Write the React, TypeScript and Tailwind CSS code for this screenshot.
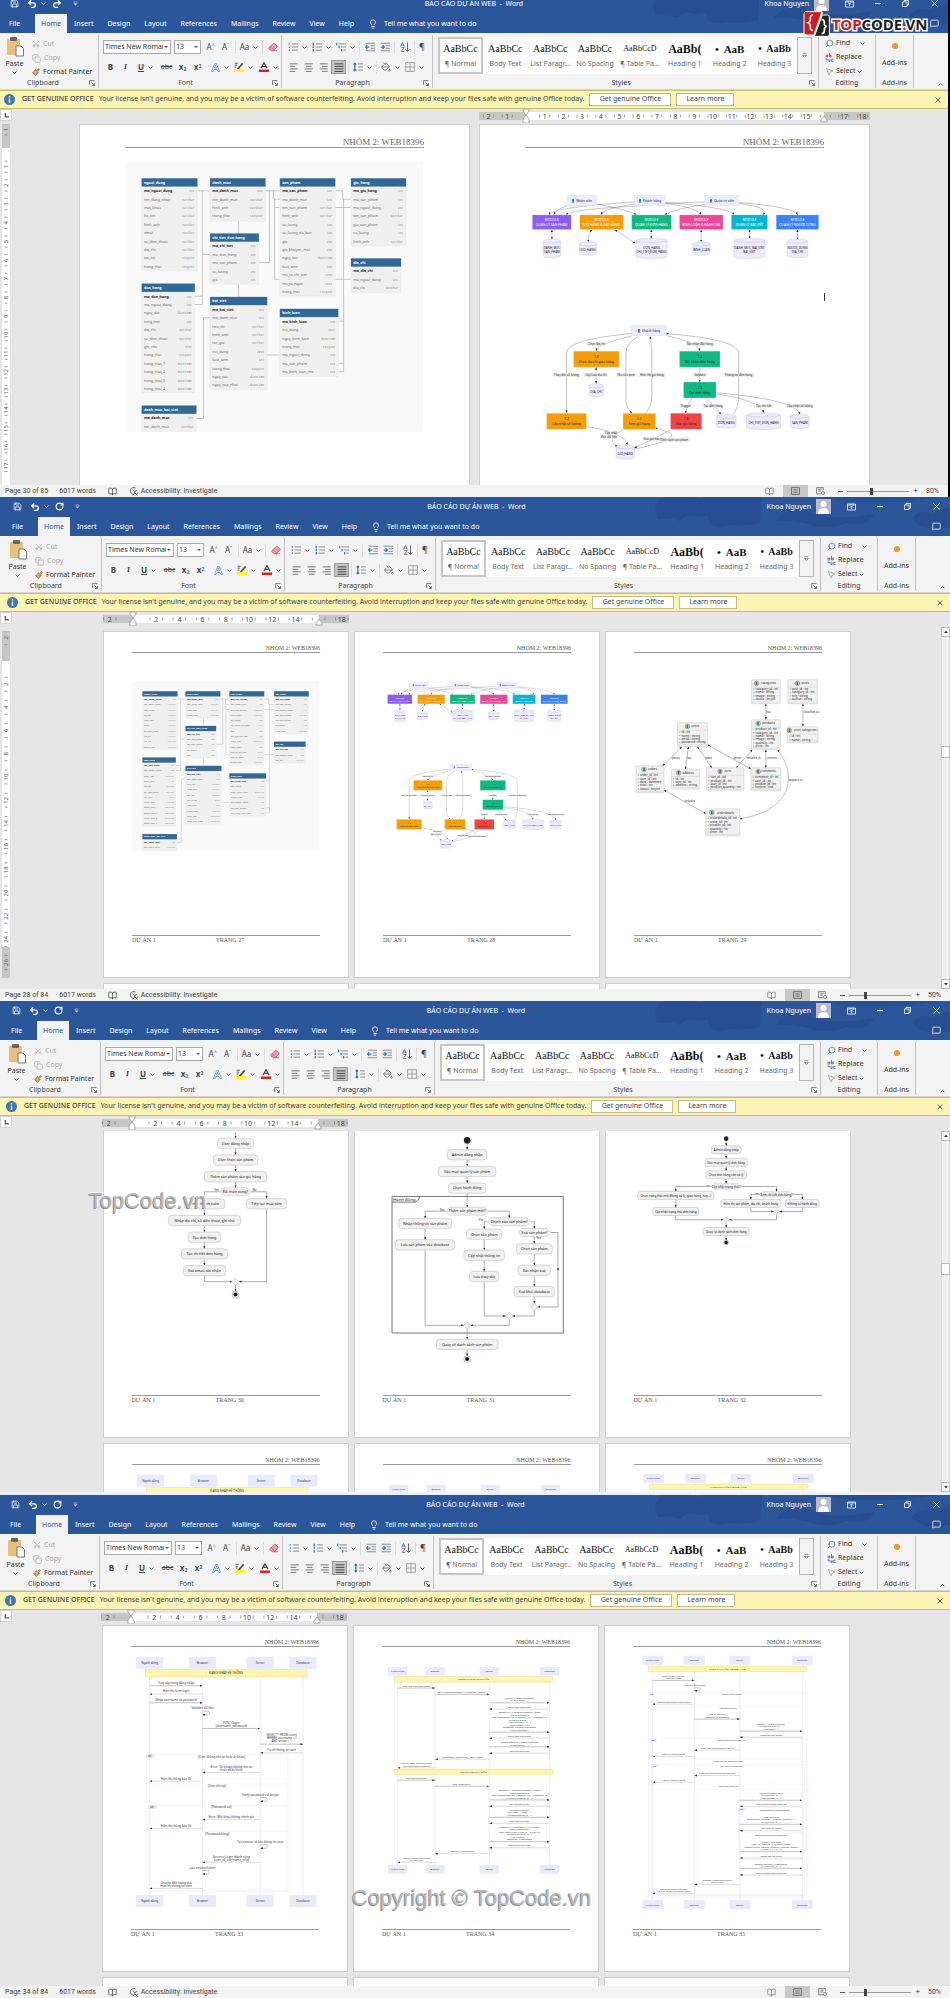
import React from "react"
import { Scissors, Copy, Paintbrush, Lightbulb, Search, MousePointer2, MessageSquare, Save, Undo2, Redo2, RotateCw, Eraser, PaintBucket, BookOpen } from "lucide-react"

const Chev = ({ className = "" }: { className?: string }) => (
  <svg viewBox="0 0 8 8" className={"h-[5px] w-[5px] shrink-0 " + className} fill="none" stroke="currentColor" strokeWidth="1.4">
    <path d="M1 2.5l3 3 3-3" />
  </svg>
)

const Sep = () => <span className="mx-[2px] h-[13px] w-px bg-[#dcdcdc]" />

/* ---------- ribbon ---------- */

const Group = ({ label, width, launcher, children }: { label: string; width: string; launcher?: boolean; children: React.ReactNode }) => (
  <section className={"flex h-[53px] flex-col justify-between border-r border-[#c2c2c2] " + width}>
    <div className="h-[43px]">{children}</div>
    <div className="flex h-[10px] items-center text-[7px] leading-[10px] whitespace-nowrap text-[#444]">
      <span className="flex-1 text-center">{label}</span>
      {launcher && (
        <button aria-label={label + " settings"} className="block w-[9px]">
          <svg viewBox="0 0 10 10" className="h-[6px] w-[6px]" fill="none" stroke="#555" strokeWidth="1.3">
            <path d="M1 8V1h8M4 4l5 5M9 5v4H5" />
          </svg>
        </button>
      )}
    </div>
  </section>
)

const Pick = ({ value, label, width }: { value: string; label: string; width: string }) => (
  <div className={"relative h-[14px] border border-[#ababab] bg-white " + width}>
    <select aria-label={label} className="block h-full w-full appearance-none pr-[7px] pl-[1px] text-[7px] leading-[12px] text-[#333] outline-none">
      <option>{value}</option>
    </select>
    <svg viewBox="0 0 8 8" className="pointer-events-none absolute top-[4px] right-[2px] h-[4px] w-[4px]">
      <path d="M0 2h8L4 6z" fill="#555" />
    </svg>
  </div>
)

const Tool = ({ label, w = "w-[15px]", on, chev, children }: { label: string; w?: string; on?: boolean; chev?: boolean; children: React.ReactNode }) => (
  <button aria-label={label} className={"flex h-[14px] shrink-0 items-center justify-center gap-[4px] text-[#444] " + w + (on ? " border border-[#9a9a9a] bg-[#c5c5c5]" : "")}>
    {children}
    {chev && <Chev />}
  </button>
)

const Lines = ({ d, color = "#666" }: { d: string; color?: string }) => (
  <svg viewBox="0 0 16 16" className="h-[10px] w-[10px]" fill="none" stroke={color} strokeWidth="1.4">
    <path d={d} />
  </svg>
)

const ListIcon = ({ dots, rows }: { dots: string; rows: string }) => (
  <svg viewBox="0 0 16 16" className="h-[10px] w-[10px]" fill="none" strokeWidth="1.3">
    <path d={dots} stroke="#3b74b8" strokeWidth="2" />
    <path d={rows} stroke="#777" />
  </svg>
)

const styles = [
  { name: "¶ Normal", sample: "AaBbCc", cls: "text-[10px]" },
  { name: "Body Text", sample: "AaBbCc", cls: "text-[10px]" },
  { name: "List Paragr...", sample: "AaBbCc", cls: "text-[10px]" },
  { name: "No Spacing", sample: "AaBbCc", cls: "text-[10px]" },
  { name: "¶ Table Pa...", sample: "AaBbCcD", cls: "text-[8px]" },
  { name: "Heading 1", sample: "AaBb(", cls: "text-[12px] font-bold" },
  { name: "Heading 2", sample: "•  AaB", cls: "text-[11px] font-bold" },
  { name: "Heading 3", sample: "•  AaBb", cls: "text-[10px] font-bold" },
]

const Ribbon = () => (
  <div className="flex h-[57px] border-b border-[#d5d5d5] bg-[#f3f3f3] pt-[2px]">
    <Group label="Clipboard" width="w-[102px]" launcher>
      <div className="flex h-full">
        <button className="flex w-[35px] flex-col items-center pt-[2px] text-[7px] leading-[9px] text-[#333]">
          <svg viewBox="0 0 18 20" className="h-[20px] w-[18px]">
            <rect x="1" y="2" width="13" height="16" rx="1" fill="#e8c07a" />
            <rect x="4" y="0" width="7" height="4" rx="1" fill="#666" />
            <path d="M10 9h5l2.500 2.500V19H10z" fill="#fff" stroke="#777" />
          </svg>
          <span className="mt-[2px]">Paste</span>
          <Chev className="mt-[2px]" />
        </button>
        <div className="flex flex-col pt-[2px] text-[7px] leading-[14px]">
          <button className="flex h-[14px] items-center gap-[3px] text-[#aaa]"><Scissors className="h-[8px] w-[8px] -rotate-90" />Cut</button>
          <button className="flex h-[14px] items-center gap-[3px] text-[#aaa]"><Copy className="h-[9px] w-[9px]" />Copy</button>
          <button className="flex h-[14px] items-center gap-[3px] text-[#333]"><Paintbrush className="h-[8px] w-[8px] text-[#8a6a3a]" fill="#e0a85a" />Format Painter</button>
        </div>
      </div>
    </Group>

    <Group label="Font" width="w-[183px]" launcher>
      <div className="flex flex-col gap-[6px] pt-[5px] pl-[4px]">
        <div className="flex items-center text-[8px]">
          <Pick value="Times New Roman" label="Font name" width="w-[68px] mr-[3px]" />
          <Pick value="13" label="Font size" width="w-[27px] mr-[2px]" />
          <Tool label="Grow font">A<sup className="-ml-[4px] text-[5px] text-[#2b6cb0]">^</sup></Tool>
          <Tool label="Shrink font">A<sup className="-ml-[4px] text-[5px] text-[#2b6cb0]">ˇ</sup></Tool>
          <Sep />
          <Tool label="Change case" w="w-[22px]" chev>Aa</Tool>
          <Sep />
          <Tool label="Clear formatting"><Eraser className="h-[10px] w-[10px] text-[#c2566a]" fill="#eb9fac" /></Tool>
        </div>
        <div className="flex items-center text-[8px]">
          <Tool label="Bold"><b>B</b></Tool>
          <Tool label="Italic"><i className="font-serif font-bold">I</i></Tool>
          <Tool label="Underline" w="w-[25px]" chev><u className="font-bold">U</u></Tool>
          <Tool label="Strikethrough" w="w-[17px]"><s className="text-[7px]">abc</s></Tool>
          <Tool label="Subscript"><b>x<sub className="text-[5px] text-[#2b6cb0]">2</sub></b></Tool>
          <Tool label="Superscript"><b>x<sup className="text-[5px] text-[#2b6cb0]">2</sup></b></Tool>
          <Sep />
          <Tool label="Text effects" w="w-[22px]" chev>
            <svg viewBox="0 0 16 16" className="h-[9px] w-[9px]" fill="#fff" stroke="#4a86c8" strokeWidth="1.3">
              <path d="M1 15L6.500 1h3L15 15h-3l-1.200-3.500H5.200L4 15zM6 9h4L8 3.500z" />
            </svg>
          </Tool>
          <Tool label="Highlight" w="w-[25px]" chev>
            <svg viewBox="0 0 16 16" className="h-[10px] w-[10px]">
              <rect y="11" width="16" height="5" fill="#fdf22f" />
              <path d="M5 10L13 1l2 2-7 8H5z" fill="#555" />
              <path d="M1 2h5M1 5h4M1 8h3" stroke="#555" strokeWidth="1.500" />
            </svg>
          </Tool>
          <Tool label="Font color" w="w-[25px]" chev>
            <svg viewBox="0 0 16 16" className="h-[10px] w-[10px]">
              <rect y="12" width="16" height="4" fill="#d92222" />
              <path d="M3 10L8 1l5 9M5 7h6" fill="none" stroke="#444" strokeWidth="1.800" />
            </svg>
          </Tool>
        </div>
      </div>
    </Group>

    <Group label="Paragraph" width="w-[151px]" launcher>
      <div className="flex flex-col gap-[6px] pt-[5px] pl-[4px]">
        <div className="flex items-center">
          <Tool label="Bullets" w="w-[23px]" chev><ListIcon dots="M1 3h2M1 8h2M1 13h2" rows="M6 3h10M6 8h10M6 13h10" /></Tool>
          <Tool label="Numbering" w="w-[25px]" chev><ListIcon dots="M2 1v4M2 6v4M2 11v4" rows="M6 3h10M6 8h10M6 13h10" /></Tool>
          <Tool label="Multilevel list" w="w-[23px]" chev><ListIcon dots="M1 1v4M5 6v4M9 11v4" rows="M4 3h12M8 8h8M12 13h4" /></Tool>
          <Sep />
          <Tool label="Decrease indent"><ListIcon dots="M7 8H1M3.500 5L1 8l2.500 3" rows="M1 2h15M9 6h7M9 10h7M1 14h15" /></Tool>
          <Tool label="Increase indent"><ListIcon dots="M1 8h6M4 5l3 3-3 3" rows="M1 2h15M9 6h7M9 10h7M1 14h15" /></Tool>
          <Sep />
          <Tool label="Sort">
            <svg viewBox="0 0 16 16" className="h-[10px] w-[10px]" fill="none" strokeWidth="1.4">
              <path d="M1 7l3-6 3 6M2 5h4" stroke="#3b74b8" />
              <path d="M2 9h5l-5 6h5" stroke="#8a4fa0" />
              <path d="M12 1v14M9 12l3 3 3-3" stroke="#555" />
            </svg>
          </Tool>
          <Sep />
          <Tool label="Show marks" w="w-[10px]"><span className="text-[9px]">¶</span></Tool>
        </div>
        <div className="flex items-center">
          <Tool label="Align left"><Lines d="M1 3h13M1 7h9M1 11h13M1 15h9" /></Tool>
          <Tool label="Center"><Lines d="M1 3h13M3 7h9M1 11h13M3 15h9" /></Tool>
          <Tool label="Align right"><Lines d="M1 3h13M5 7h9M1 11h13M5 15h9" /></Tool>
          <Tool label="Justify" on><Lines d="M1 3h14M1 7h14M1 11h14M1 15h14" color="#333" /></Tool>
          <Sep />
          <Tool label="Line spacing" w="w-[23px]" chev><ListIcon dots="M3 2v12M1 4l2-2 2 2M1 12l2 2 2-2" rows="M8 3h8M8 8h8M8 13h8" /></Tool>
          <Sep />
          <Tool label="Shading" w="w-[23px]" chev><PaintBucket className="h-[10px] w-[10px]" strokeWidth={1.5} /></Tool>
          <Tool label="Borders" w="w-[25px]" chev><Lines d="M1 1h14v14H1zM8 1v14M1 8h14" color="#999" /></Tool>
        </div>
      </div>
    </Group>

    <Group label="Styles" width="min-w-0 flex-1" launcher>
      <div className="flex pt-[2px] pr-[6px] pl-[5px]">
        <div className="grid h-[37px] flex-1 grid-cols-8 bg-white">
          {styles.map((s, i) => (
            <button key={s.name} className={"flex min-w-0 flex-col items-center justify-center overflow-hidden whitespace-pre " + (i === 0 ? "border-2 border-[#c6c6c6]" : "")}>
              <span className={"h-[16px] font-['Liberation_Serif',serif] leading-[16px] text-[#111] " + s.cls}>{s.sample}</span>
              <span className="text-[7px] leading-[13px] text-[#666]">{s.name}</span>
            </button>
          ))}
        </div>
        <button aria-label="More styles" className="flex h-[37px] w-[15px] items-center justify-center border border-[#b5b5b5] bg-[#f3f3f3]">
          <svg viewBox="0 0 8 8" className="h-[5px] w-[5px]" fill="none" stroke="#555"><path d="M1 1h6M1 4l3 3 3-3z" /></svg>
        </button>
      </div>
    </Group>

    <Group label="Editing" width="w-[57px]">
      <div className="flex flex-col pt-[1px] pl-[6px] text-[7px] leading-[14px] text-[#333]">
        <button className="flex h-[14px] items-center gap-[2px]"><Search className="h-[9px] w-[9px] -scale-x-100 text-[#3b74b8]" />Find<Chev className="ml-[8px]" /></button>
        <button className="flex h-[14px] items-center gap-[2px]">
          <svg viewBox="0 0 16 16" className="h-[9px] w-[9px]" fill="none" strokeWidth="1.6">
            <path d="M5 3v4H2V4h3M8 0v7h3V4H8" stroke="#8a4fa0" />
            <path d="M2 9v3h4M9 11v4H7v-3M15 11h-3v4h3" stroke="#3b74b8" />
          </svg>
          Replace
        </button>
        <button className="flex h-[14px] items-center gap-[2px]"><MousePointer2 className="h-[9px] w-[9px] text-[#999]" />Select<Chev /></button>
      </div>
    </Group>

    <Group label="Add-ins" width="w-[38px]">
      <button className="flex w-full flex-col items-center gap-[9px] pt-[8px] text-[7px] leading-[9px] whitespace-nowrap text-[#333]">
        <span className="h-[6px] w-[6px] rounded-full bg-[#f0962a]" />
        Add-ins
      </button>
    </Group>

    <div className="flex w-[34px] items-end justify-end pr-[5px] pb-[2px] text-[#555]">
      <button aria-label="Collapse ribbon"><Chev className="rotate-180" /></button>
    </div>
  </div>
)

/* ---------- title bar, tabs, notice ---------- */

const tabs = ["Insert", "Design", "Layout", "References", "Mailings", "Review", "View", "Help"]

const TitleBar = ({ redo }: { redo?: boolean }) => (
  <header className="relative h-[39px] bg-[#2b579a] text-white">
    <svg viewBox="0 0 300 39" className="absolute top-0 right-0 h-[39px] w-[300px]" fill="#26498a" opacity="0.6">
      <path d="M6 8Q4 16 8 22Q20 20 30 24Q36 16 48 20L64 18Q60 10 66 4L40 0H12z" />
      <path d="M52 0L60 26Q66 32 78 28Q92 30 110 26L112 0z" />
      <path d="M126 24Q134 10 158 14L176 20Q200 22 224 17Q220 30 196 26Q180 34 158 27Q140 22 126 24z" />
      <path d="M262 22Q270 12 282 16L300 10V30Q280 34 268 28z" />
      <path d="M170 0Q200 8 260 4L290 0z" />
    </svg>
    <div className="relative flex h-[19px] items-center">
      <div className="flex flex-1 items-center pl-[13px]">
        <button aria-label="Save"><Save className="h-[9px] w-[9px]" /></button>
        <button aria-label="Undo" className="ml-[8px] flex items-center gap-[4px]"><Undo2 className="h-[10px] w-[10px]" strokeWidth={3} /><Chev /></button>
        <button aria-label="Repeat" className="ml-[6px]">
          {redo ? <Redo2 className="h-[10px] w-[10px]" strokeWidth={3} /> : <RotateCw className="h-[9px] w-[9px]" strokeWidth={3} />}
        </button>
        <button aria-label="Customize" className="ml-[11px]">
          <svg viewBox="0 0 8 8" className="h-[5px] w-[5px]" fill="#fff"><path d="M1 1h6v1H1zM1 4h6L4 7z" /></svg>
        </button>
      </div>
      <h1 className="text-[7px] leading-[10px] whitespace-pre">BÁO CÁO DỰ ÁN WEB  -  Word</h1>
      <div className="flex flex-1 items-center justify-end pr-[10px]">
        <span className="text-[7px] leading-[10px]">Khoa Nguyen</span>
        <svg viewBox="0 0 15 15" className="ml-[5px] h-[15px] w-[15px]">
          <rect width="15" height="15" fill="#b9bcc4" />
          <circle cx="7.500" cy="5" r="3" fill="#fff" />
          <path d="M2 15q0-6 5.500-6T13 15z" fill="#fff" />
        </svg>
        <button aria-label="Ribbon display options" className="ml-[16px]">
          <svg viewBox="0 0 18 16" className="h-[8px] w-[9px]" fill="none" stroke="#fff" strokeWidth="1.600"><path d="M1 2h16v12H1zM1 4h16M9 12V6M6 9l3-3 3 3" /></svg>
        </button>
        <button aria-label="Minimize" className="ml-[21px]"><span className="block h-px w-[6px] bg-white" /></button>
        <button aria-label="Restore" className="ml-[21px]">
          <svg viewBox="0 0 14 14" className="h-[7px] w-[7px]" fill="none" stroke="#fff" strokeWidth="1.600"><path d="M1 4h9v9H1zM4 4V1h9v9h-3" /></svg>
        </button>
        <button aria-label="Close" className="ml-[22px]">
          <svg viewBox="0 0 14 14" className="h-[7px] w-[7px]" stroke="#fff" strokeWidth="1.800"><path d="M1 1l12 12M13 1L1 13" /></svg>
        </button>
      </div>
    </div>
    <nav className="relative mt-px flex h-[19px] items-stretch text-[7px] leading-[18px]">
      <button className="w-[38px] pl-[12px] text-left">File</button>
      <button className="w-[32px] bg-[#f3f3f3] text-[#2b579a]">Home</button>
      {tabs.map((t) => (
        <button key={t} className="px-[7px]">{t}</button>
      ))}
      <button className="ml-[7px] flex items-center gap-[6px]"><Lightbulb className="h-[10px] w-[10px]" />Tell me what you want to do</button>
      <button aria-label="Comments" className="mr-[9px] ml-auto"><MessageSquare className="h-[9px] w-[9px]" /></button>
    </nav>
  </header>
)

const Notice = () => (
  <div className="flex h-[19px] items-center border-y border-[#c9bd72] bg-[#fcf4b5] pl-[7px] text-[7px] text-[#444]">
    <svg viewBox="0 0 12 12" className="h-[11px] w-[11px] shrink-0">
      <circle cx="6" cy="6" r="6" fill="#3f78ab" />
      <path d="M6 2.200v1.600M6 5v4.500" stroke="#fff" strokeWidth="1.600" />
    </svg>
    <strong className="ml-[7px] font-medium whitespace-nowrap">GET GENUINE OFFICE</strong>
    <span className="ml-[5px] whitespace-nowrap">Your license isn't genuine, and you may be a victim of software counterfeiting. Avoid interruption and keep your files safe with genuine Office today.</span>
    <button className="ml-[5px] h-[13px] w-[82px] border border-[#c3bd8c] bg-white whitespace-nowrap">Get genuine Office</button>
    <button className="ml-[5px] h-[13px] w-[58px] border border-[#c3bd8c] bg-white">Learn more</button>
    <button aria-label="Dismiss" className="mr-[7px] ml-auto">
      <svg viewBox="0 0 10 10" className="h-[6px] w-[6px]" stroke="#555" strokeWidth="1.600"><path d="M1 1l8 8M9 1L1 9" /></svg>
    </button>
  </div>
)

/* ---------- rulers, scroll bar, status bar ---------- */

// length in px, zero = position of 0, unit = px per cm, step = cm between numbers
const Ruler = ({ length, zero, end, unit, step, className = "" }: { length: number; zero: number; end: number; unit: number; step: number; className?: string }) => {
  const marks: number[] = []
  for (let n = -2; n * unit + zero < length - 2; n += step) if (n !== 0) marks.push(n)
  return (
    <svg viewBox={`0 0 ${length} 14`} width={length} height="14" className={"shrink-0 " + className} fontSize="7" fill="#444" textAnchor="middle">
      <rect y="3" width={length} height="8" fill="#c6c6c6" />
      <rect x={zero} y="3" width={end - zero} height="8" fill="#fff" />
      {marks.map((n) => (
        <g key={n}>
          {Math.abs(n * unit + zero - end) > 5 && <text x={zero + n * unit} y="9.500">{Math.abs(n)}</text>}
          <path d={`M${zero + (n - step * 0.27) * unit} 5.500v3M${zero + (n + step * 0.27) * unit} 5.500v3`} stroke="#777" strokeWidth="0.700" />
        </g>
      ))}
      <path d={`M${zero - 3} 0h6v2l-3 4-3-4zM${zero - 3} 10l3-4 3 4v4h-6z`} fill="#fff" stroke="#888" strokeWidth="0.700" />
      <path d={`M${end - 3} 11l3-4 3 4v2h-6z`} fill="#fff" stroke="#888" strokeWidth="0.700" />
    </svg>
  )
}

const SideRuler = ({ height, zero, end, unit, step }: { height: number; zero: number; end: number; unit: number; step: number }) => {
  const marks: number[] = []
  for (let n = -2; n * unit + zero < height - 3; n += step) if (n !== 0 && n * unit + zero > 3) marks.push(n)
  return (
    <svg viewBox={`0 0 8 ${height}`} width="8" height={height} className="absolute top-0 left-[2px]" fontSize="6" fill="#555" textAnchor="middle">
      <rect width="8" height={height} fill="#c6c6c6" />
      <rect y={zero} width="8" height={end - zero} fill="#fff" />
      {marks.map((n) => (
        <g key={n} transform={`translate(6 ${zero + n * unit}) rotate(-90)`}>
          <text>{Math.abs(n)}</text>
          <path d={`M${-step * unit * 0.3} -3.500v3M${step * unit * 0.3} -3.500v3`} stroke="#777" strokeWidth="0.700" />
        </g>
      ))}
    </svg>
  )
}

const ScrollBar = ({ thumb }: { thumb: string }) => (
  <div className="flex w-[9px] flex-col items-center border-x border-[#dcdcdc] bg-[#f0f0f0]">
    <span className="flex h-[10px] w-[9px] items-center justify-center border border-[#bbb] bg-white"><svg viewBox="0 0 8 8" className="h-[4px] w-[4px]"><path d="M0 6l4-5 4 5z" fill="#333" /></svg></span>
    <span className={"h-[12px] w-[9px] border border-[#bbb] bg-white " + thumb} />
    <span className="mt-auto flex h-[10px] w-[9px] items-center justify-center border border-[#bbb] bg-white"><svg viewBox="0 0 8 8" className="h-[4px] w-[4px]"><path d="M0 2l4 5 4-5z" fill="#333" /></svg></span>
  </div>
)

const StatusBar = ({ page, zoom, value }: { page: string; zoom: string; value: number }) => (
  <footer className="flex h-[12px] items-center bg-[#f3f3f3] pl-[5px] font-['Roboto',sans-serif] text-[7px] leading-[12px] text-[#444]">
    <span>{page}</span>
    <span className="ml-[11px]">6017 words</span>
    <BookOpen className="ml-[12px] h-[9px] w-[9px]" />
    <svg viewBox="0 0 16 16" className="ml-[13px] h-[9px] w-[9px]" fill="none" stroke="#555" strokeWidth="1.600">
      <path d="M7 13A6 6 0 1 1 10 2M5 5l3 3v3l-3 4M8 8l5-2M9 11l5 4M14 10l-4 5" />
    </svg>
    <span className="ml-[2px]">Accessibility: Investigate</span>
    <div className="ml-auto flex items-center pr-[8px]">
      <button aria-label="Read mode"><BookOpen className="h-[9px] w-[9px] text-[#777]" /></button>
      <button aria-label="Print layout" className="ml-[9px] flex h-[12px] w-[25px] items-center justify-center bg-[#c8c8c8]">
        <svg viewBox="0 0 16 14" className="h-[8px] w-[9px]" fill="none" stroke="#666" strokeWidth="1.600"><path d="M1 1h14v12H1zM4 5h8M4 9h8" /></svg>
      </button>
      <button aria-label="Web layout" className="ml-[8px]">
        <svg viewBox="0 0 16 14" className="h-[8px] w-[9px]" fill="none" stroke="#777" strokeWidth="1.600"><path d="M10 12H1V1h12v5M4 4h6M4 7h5" /><circle cx="12.500" cy="10.500" r="2.800" /></svg>
      </button>
      <button aria-label="Zoom out" className="ml-[13px]"><span className="block h-px w-[5px] bg-[#555]" /></button>
      <input
        type="range" aria-label="Zoom" min="0" max="100" defaultValue={value}
        className="mx-[4px] h-px w-[62px] appearance-none bg-[#999] [&::-webkit-slider-thumb]:h-[7px] [&::-webkit-slider-thumb]:w-[3px] [&::-webkit-slider-thumb]:appearance-none [&::-webkit-slider-thumb]:bg-[#444]"
      />
      <button aria-label="Zoom in" className="text-[8px]">+</button>
      <span className="ml-[8px] w-[14px]">{zoom}</span>
    </div>
  </footer>
)

/* ---------- paper ---------- */

const Sheet = ({ children, page, gap = "" }: { children?: React.ReactNode; page?: string; gap?: string }) => (
  <article className="flex h-[347px] w-[246px] shrink-0 flex-col border border-[#d0d0d0] bg-white px-[28px] font-['Liberation_Serif',serif] text-[6px] leading-[6px] text-[#555]">
    <div className="mt-[13px] h-[8px] border-b border-[#999] text-right">NHÓM 2: WEB18396</div>
    <div className={"h-[282px] " + gap}>{children}</div>
    <div className="grid grid-cols-[84px_1fr] border-t border-[#999] pt-px">
      <span>DỰ ÁN 1</span>
      <span>TRANG {page}</span>
    </div>
  </article>
)

const BigSheet = ({ children, gap }: { children: React.ReactNode; gap: string }) => (
  <article className="h-[372px] w-[391px] shrink-0 border border-b-0 border-[#d0d0d0] bg-white px-[45px] font-['Liberation_Serif',serif] text-[9px] leading-[10px] text-[#666]">
    <div className="mt-[12px] h-[11px] border-b border-[#999] text-right">NHÓM 2: WEB18396</div>
    <div className={gap}>{children}</div>
  </article>
)

/* ---------- database tables ---------- */

type Table = { name: string; x: number; y: number; w: number; rows: string }
const tables: Table[] = [
  { name: "nguoi_dung", x: 215, y: 174, w: 168, rows: "ma_nguoi_dung:int,ten_dang_nhap:varchar,mat_khau:varchar,ho_ten:varchar,hinh_anh:varchar,email:varchar,so_dien_thoai:varchar,dia_chi:varchar,vai_tro:tinyint,trang_thai:tinyint" },
  { name: "danh_muc", x: 421, y: 174, w: 167, rows: "ma_danh_muc:int,ten_danh_muc:varchar,hinh_anh:varchar,trang_thai:tinyint" },
  { name: "san_pham", x: 631, y: 174, w: 167, rows: "ma_san_pham:int,ma_danh_muc:int,ten_san_pham:varchar,hinh_anh:varchar,so_luong:int,so_luong_da_ban:int,gia:int,gia_khuyen_mai:int,ngay_tao:datetime,luot_xem:int,mo_ta_chi_tiet:text,mo_ta_ngan:text,trang_thai:tinyint" },
  { name: "gio_hang", x: 845, y: 174, w: 166, rows: "ma_gio_hang:int,ma_san_pham:int,ma_nguoi_dung:int,ten_san_pham:varchar,gia_san_pham:int,so_luong:int,hinh_anh:varchar" },
  { name: "chi_tiet_don_hang", x: 421, y: 340, w: 147, rows: "ma_chi_tiet:int,ma_don_hang:int,ma_san_pham:int,so_luong:int,gia:int" },
  { name: "dia_chi", x: 845, y: 415, w: 151, rows: "ma_dia_chi:int,ma_nguoi_dung:int,dia_chi:varchar" },
  { name: "don_hang", x: 215, y: 491, w: 160, rows: "ma_don_hang:int,ma_nguoi_dung:int,ngay_dat:datetime,tong_tien:int,dia_chi:varchar,so_dien_thoai:varchar,ghi_chu:text,trang_thai:tinyint,trang_thai_1:datetime,trang_thai_2:datetime,trang_thai_3:datetime,trang_thai_4:datetime" },
  { name: "bai_viet", x: 421, y: 531, w: 172, rows: "ma_bai_viet:int,ma_danh_muc:int,tieu_de:varchar,hinh_anh:varchar,tac_gia:varchar,noi_dung:text,luot_xem:int,trang_thai:tinyint,ngay_tao:datetime,ngay_cap_nhat:datetime" },
  { name: "binh_luan", x: 631, y: 567, w: 176, rows: "ma_binh_luan:int,noi_dung:text,ngay_binh_luan:datetime,trang_thai:tinyint,ma_nguoi_dung:int,ma_san_pham:int,ma_binh_luan_cha:int" },
  { name: "danh_muc_bai_viet", x: 215, y: 858, w: 165, rows: "ma_danh_muc:int,ten_danh_muc:varchar" },
]

const Schema = () => (
  <svg viewBox="165 125 900 812" className="block w-full font-['Noto_Sans',sans-serif]" fontSize="11">
    <rect x="167" y="125" width="895" height="812" fill="#fafafa" />
    <path
      fill="none" stroke="#aaa" strokeWidth="2"
      d="M383 212H421M398 212V554H375M375 529H398M398 403H421M588 212H631M600 212V428H568M612 212V237H631M615 237V478H631M615 262H631M798 212H820V237H845M798 262H845M823 237V756H808M808 604H823M808 731H823M798 478H845M507 302V340M507 493V531M593 706H631M380 897H401V594H421"
    />
    {tables.map((t) => {
      const rows = t.rows.split(",")
      return (
        <g key={t.name}>
          <rect x={t.x} y={t.y} width={t.w} height={rows.length * 25 + 29} rx="3" fill="#f0f0f0" stroke="#e4e4e4" />
          <rect x={t.x} y={t.y} width={t.w} height="25" fill="#316896" />
          <text x={t.x + 7} y={t.y + 16} fill="#fff" fontWeight="bold">{t.name}</text>
          {rows.map((r, i) => {
            const [name, type] = r.split(":")
            return (
              <g key={name} fill={i ? "#666" : "#222"}>
                <text x={t.x + 7} y={t.y + 42 + i * 25.3} fontWeight={i ? 400 : 700}>{name}</text>
                <text x={t.x + t.w - 9} y={t.y + 42 + i * 25.3} textAnchor="end" fill="#888" fontSize="9" className="font-['Liberation_Mono',monospace]">{type}</text>
              </g>
            )
          })}
        </g>
      )
    })}
  </svg>
)

/* ---------- data flow ---------- */

const Box = ({ x, y, w, h, fill, color = "#222", text }: { x: number; y: number; w: number; h: number; fill: string; color?: string; text: string }) => {
  const lines = text.split("|")
  return (
    <g>
      <rect x={x} y={y} width={w} height={h} fill={fill} stroke={fill === "#ececff" ? "#cfc0ef" : "#ffffff"} strokeOpacity="0.6" />
      {lines.map((l, i) => (
        <text key={i} x={x + w / 2} y={y + h / 2 + 4 + (i - (lines.length - 1) / 2) * 14} textAnchor="middle" fill={color} fontSize="10">{l}</text>
      ))}
    </g>
  )
}

const Drum = ({ x, y, w, h, text }: { x: number; y: number; w: number; h: number; text: string }) => {
  const lines = text.split("|")
  return (
    <g>
      <path d={`M${x} ${y + 6}v${h - 12}a${w / 2} 6 0 0 0 ${w} 0v${12 - h}a${w / 2} 6 0 0 0 ${-w} 0a${w / 2} 6 0 0 0 ${w} 0`} fill="#ececff" stroke="#b9a5e2" />
      {lines.map((l, i) => (
        <text key={i} x={x + w / 2} y={y + h / 2 + 8 + (i - (lines.length - 1) / 2) * 13} textAnchor="middle" fill="#222" fontSize="9">{l}</text>
      ))}
    </g>
  )
}

const flowNotes: [number, number, string][] = [
  [365, 677, "Chọn địa chỉ"], [676, 677, "Xác nhận đặt hàng"], [275, 770, "Thay đổi số lượng"], [364, 770, "Lấy/Lưu địa chỉ"],
  [454, 770, "Yêu cầu xem"], [532, 770, "Hiển thị giỏ hàng"], [676, 770, "Validate"], [793, 770, "Thông tin đơn hàng"],
  [634, 863, "Trigger"], [716, 863, "Tạo đơn hàng"], [868, 863, "Tạo chi tiết"], [977, 863, "Cập nhật số lượng"],
  [409, 944, "Cập nhật"], [403, 957, "Đọc dữ liệu"], [534, 962, "Xóa giỏ hàng"], [600, 965, "Tính sách sản phẩm"],
]

const flowLines = [
  "M277 257Q245 268 237 284", "M365 252Q460 270 485 284", "M478 246Q230 262 223 284", "M478 252Q385 266 380 284",
  "M691 246Q560 250 478 259Q290 268 274 284", "M572 250Q670 264 680 284", "M572 247Q760 262 780 284", "M691 254Q600 266 571 284",
  "M793 250Q890 264 866 284", "M793 247Q960 262 970 284", "M470 642Q275 660 275 700V880", "M470 650Q370 672 364 694",
  "M492 651Q454 670 454 700V850Q456 868 472 881", "M514 881Q532 860 532 830V700L527 651", "M575 648Q670 668 676 694", "M676 744V788",
  "M775 884Q793 870 793 830V700Q793 660 575 642", "M652 837Q636 856 634 881", "M698 837L740 885", "M725 824Q860 844 868 880",
  "M725 820Q970 842 977 884", "M336 922Q450 940 458 977", "M446 932Q390 960 428 982", "M590 932L480 986", "M480 990Q620 960 585 940L542 926",
]
const flowStores = ["M231 330V358", "M352 330Q340 340 340 366", "M421 330L482 370", "M530 330V356", "M680 330V366", "M826 330V356", "M970 330V360", "M364 744V792"]

const Flow = () => (
  <svg viewBox="150 210 900 820" className="block w-full font-['Noto_Sans',sans-serif]">
    <g fill="none" stroke="#777" strokeWidth="1.3">
      {flowLines.map((d) => <path key={d} d={d} markerEnd="url(#arr)" />)}
      {flowStores.map((d) => <path key={d} d={d} markerStart="url(#arr)" markerEnd="url(#arr)" />)}
    </g>
    <Box x={277} y={226} w={88} h={31} fill="#ececff" text="👤 Nhân viên" />
    <Box x={478} y={226} w={94} h={31} fill="#ececff" text="👤 Khách hàng" />
    <Box x={691} y={226} w={102} h={31} fill="#ececff" text="👤 Quản trị viên" />
    <Box x={172} y={285} w={117} h={44} fill="#8b5cf6" color="#fff" text="MODULE|QUẢN LÝ SẢN PHẨM" />
    <Box x={315} y={285} w={131} h={44} fill="#f59e0b" color="#fff" text="MODULE|GIỎ HÀNG & ĐẶT HÀNG" />
    <Box x={471} y={285} w={119} h={44} fill="#10b981" color="#fff" text="MODULE|QUẢN LÝ ĐƠN HÀNG" />
    <Box x={615} y={285} w={131} h={44} fill="#ec4899" color="#fff" text="MODULE|BÌNH LUẬN & ĐÁNH GIÁ" />
    <Box x={771} y={285} w={109} h={44} fill="#06b6d4" color="#fff" text="MODULE|QUẢN LÝ BÀI VIẾT" />
    <Box x={906} y={285} w={128} h={44} fill="#3b82f6" color="#fff" text="MODULE|QUẢN LÝ NGƯỜI DÙNG" />
    <Drum x={205} y={358} w={52} h={56} text="DANH_MUC|SAN_PHAM" />
    <Drum x={314} y={366} w={51} h={40} text="GIO_HANG" />
    <Drum x={484} y={356} w={94} h={60} text="DON_HANG|CHI_TIET_DON_HANG" />
    <Drum x={655} y={366} w={52} h={40} text="BINH_LUAN" />
    <Drum x={779} y={356} w={93} h={60} text="DANH_MUC_BAI_VIET|BAI_VIET" />
    <Drum x={939} y={358} w={62} h={56} text="NGUOI_DUNG|DIA_CHI" />
    <Box x={470} y={618} w={105} h={31} fill="#ececff" text="👤 Khách hàng" />
    <Box x={296} y={695} w={137} h={48} fill="#f59e0b" text="1.3|Chọn địa chỉ giao hàng" />
    <Box x={615} y={695} w={122} h={48} fill="#10b981" text="1.4|Xác nhận đơn hàng" />
    <Box x={627} y={788} w={98} h={48} fill="#10b981" text="1.5|Tạo đơn hàng" />
    <Box x={215} y={882} w={120} h={48} fill="#f59e0b" text="1.2|Cập nhật số lượng" />
    <Box x={445} y={882} w={98} h={48} fill="#f59e0b" text="1.1|Xem giỏ hàng" />
    <Box x={588} y={882} w={94} h={48} fill="#ef4444" text="1.6|Xóa giỏ hàng" />
    <Drum x={343} y={793} w={43} h={39} text="DIA_CHI" />
    <Drum x={727} y={885} w={58} h={42} text="DON_HANG" />
    <Drum x={817} y={881} w={102} h={50} text="CHI_TIET_DON_HANG" />
    <Drum x={949} y={885} w={56} h={43} text="SAN_PHAM" />
    <Drum x={424} y={977} w={55} h={43} text="GIO_HANG" />
    {flowNotes.map(([x, y, t]) => (
      <g key={t + x}>
        <rect x={x - t.length * 2.5} y={y - 9} width={t.length * 5} height="12" fill="#ebebeb" fillOpacity="0.8" />
        <text x={x} y={y} fontSize="9" textAnchor="middle" fill="#222">{t}</text>
      </g>
    ))}
  </svg>
)

/* ---------- entity diagram ---------- */

const entities: [string, number, number, number, number, string[]][] = [
  ["categories", 484, 163, 86, 72, ["category_id : int", "name : string", "image : string", "status : tinyint"]],
  ["posts", 593, 163, 88, 72, ["post_id : int", "category_id : int", "title : string", "author : string"]],
  ["products", 484, 283, 86, 90, ["product_id : int", "category_id : int", "name : string", "image : string", "quantity : int", "price : int"]],
  ["post_categories", 592, 304, 91, 48, ["id : int", "name : string"]],
  ["users", 262, 292, 91, 71, ["id : int", "name : string", "email : string", "password : string"]],
  ["orders", 138, 421, 84, 81, ["order_id : int", "user_id : int", "date : datetime", "total : int", "status : tinyint"]],
  ["address", 244, 431, 84, 60, ["id : int", "user_id : int", "address : string"]],
  ["carts", 349, 427, 112, 69, ["cart_id : int", "product_id : int", "user_id : int", "product_quantity : int"]],
  ["comments", 482, 427, 90, 69, ["comment_id : int", "user_id : int", "product_id : int", "content : text"]],
  ["orderdetails", 347, 550, 102, 81, ["orderdetails_id : int", "order_id : int", "product_id : int", "quantity : int", "price : int"]],
]
const relations: [string, number, number, string][] = [
  ["M527 236V282", 535, 262, "has"], ["M638 236V302", 663, 262, "classified_as"], ["M275 364L218 421", 257, 400, "places"],
  ["M295 364L286 430", 297, 400, "has"], ["M322 364L365 427", 355, 400, "owns"], ["M352 358L482 430", 441, 400, "writes"],
  ["M486 373L438 427", 490, 400, "included_in"], ["M527 373V427", 545, 400, "receives"], ["M562 373C615 440 620 550 449 580", 616, 465, "appears_in"],
  ["M222 494L347 564", 299, 528, "includes"],
]

const Entities = () => (
  <svg viewBox="132 155 563 480" className="block w-full font-['Noto_Sans',sans-serif]" fontSize="9">
    {relations.map(([d, x, y, t]) => (
      <g key={t + x}>
        <path d={d} fill="none" stroke="#666" strokeWidth="1.3" markerStart="url(#arr)" markerEnd="url(#arr)" />
        <text x={x} y={y} textAnchor="middle" fontSize="8" fill="#222">{t}</text>
      </g>
    ))}
    {entities.map(([name, x, y, w, h, fields]) => (
      <g key={name}>
        <rect x={x} y={y} width={w} height={h} rx="2" fill="#f1f1f1" stroke="#aaa" />
        <path d={`M${x} ${y + 22}h${w}M${x} ${y + h - 5}h${w}`} stroke="#bbb" />
        <circle cx={x + w / 2 - name.length * 2.500 - 3} cy={y + 11} r="7" fill="#add1b2" stroke="#444" />
        <text x={x + w / 2 - name.length * 2.500 - 3} y={y + 15} textAnchor="middle" fontWeight="bold" fill="#111">E</text>
        <text x={x + w / 2 + 8} y={y + 14} textAnchor="middle" fill="#222">{name}</text>
        {fields.map((f, i) => (
          <g key={f}>
            <circle cx={x + 7} cy={y + 28 + i * 10.300} r="2" fill="#84be84" />
            <text x={x + 12} y={y + 31 + i * 10.300} fill="#222">{f}</text>
          </g>
        ))}
      </g>
    ))}
  </svg>
)

/* ---------- activity diagrams ---------- */

type Shape = [kind: "n" | "h" | "d" | "s" | "e", x: number, y: number, w?: number, text?: string]

const Activity = ({ box, shapes, lines, labels = [], small, children }: { box: string; shapes: Shape[]; lines: string[]; labels?: [number, number, string][]; small?: boolean; children?: React.ReactNode }) => {
  const h = small ? 24 : 31
  const size = small ? 9 : 11
  return (
    <svg viewBox={box} className="block w-full font-['Noto_Sans',sans-serif]" fontSize={size}>
      {children}
      {lines.map((d) => <path key={d} d={d} fill="none" stroke="#444" strokeWidth="1.300" markerEnd="url(#arr)" />)}
      {shapes.map(([kind, x, y, w = 22, text], i) => {
        if (kind === "s") return <circle key={i} cx={x} cy={y} r={small ? 7 : 10} fill="#222" />
        if (kind === "e") return <g key={i}><circle cx={x} cy={y} r={small ? 7 : 10} fill="#fff" stroke="#333" /><circle cx={x} cy={y} r={small ? 5 : 6} fill="#111" /></g>
        if (kind === "d") return <path key={i} d={small ? `M${x} ${y - 8}l8 8-8 8-8-8z` : `M${x} ${y - 11}l11 11-11 11-11-11z`} fill="#f1f1f1" stroke="#888" />
        const k = small ? 8 : 12
        return (
          <g key={i}>
            {kind === "n"
              ? <rect x={x - w / 2} y={y - h / 2} width={w} height={h} rx={small ? 8 : 10} fill="#f1f1f1" stroke="#999" />
              : <path d={`M${x - w / 2 + k} ${y - k}H${x + w / 2 - k}L${x + w / 2} ${y}L${x + w / 2 - k} ${y + k}H${x - w / 2 + k}L${x - w / 2} ${y}z`} fill="#f1f1f1" stroke="#999" />}
            <text x={x} y={y + 4} textAnchor="middle" fill="#111">{text}</text>
          </g>
        )
      })}
      {labels.map(([x, y, t]) => <text key={x} x={x} y={y} textAnchor="middle" fontSize={small ? 7 : 9} fill="#222">{t}</text>)}
    </svg>
  )
}

const OrderActivity = () => (
  <Activity
    box="396 93 563 510"
    lines={["M706 90V111", "M706 142V161", "M706 192V211", "M706 242V260", "M660 272H613V292", "M752 272H799V292", "M613 324V342", "M613 374V392", "M613 424V442", "M613 474V492", "M613 524V541H695", "M799 324V541H717", "M706 551V570"]}
    labels={[[649, 270, "Yes"], [763, 270, "No"]]}
    shapes={[
      ["n", 706, 127, 108, "User đăng nhập"], ["n", 706, 177, 133, "User chọn sản phẩm"], ["n", 706, 227, 186, "Thêm sản phẩm vào giỏ hàng"],
      ["h", 706, 272, 93, "Đã chọn xong?"], ["n", 613, 308, 122, "Chọn thanh toán"], ["n", 799, 308, 120, "Tiếp tục mua sắm"],
      ["n", 613, 358, 216, "Nhập địa chỉ, số điện thoại, ghi chú"], ["n", 613, 408, 97, "Tạo đơn hàng"], ["n", 613, 458, 138, "Tạo chi tiết đơn hàng"],
      ["n", 613, 508, 127, "Gửi email xác nhận"], ["d", 706, 541], ["e", 706, 580],
    ]}
  />
)

const ProductActivity = () => (
  <Activity
    box="1147 93 563 700"
    lines={["M1399 128V145", "M1399 176V195", "M1399 226V245", "M1399 277V318", "M1335 330H1273V351", "M1273 383V415", "M1273 447V672H1388", "M1463 330H1525V350", "M1461 362H1450V383", "M1450 415V446", "M1450 478V510", "M1450 542V644H1514", "M1589 362H1600V382", "M1600 406V427", "M1600 459V491", "M1600 523V555", "M1600 587V606", "M1649 394H1671V508", "M1671 508V617H1611", "M1600 628V644H1536", "M1525 655V672H1410", "M1399 683V713", "M1399 745V763"]}
    labels={[[1324, 329, "Yes"], [1441, 360, "Yes"], [1613, 414, "Yes"]]}
    shapes={[
      ["s", 1399, 118], ["n", 1399, 161, 118, "Admin đăng nhập"], ["n", 1399, 211, 172, "Vào mục quản lý sản phẩm"], ["n", 1399, 261, 112, "Chọn hành động"],
      ["h", 1399, 330, 128, "Thêm sản phẩm mới?"], ["n", 1273, 367, 160, "Nhập thông tin sản phẩm"], ["n", 1273, 431, 178, "Lưu sản phẩm vào database"],
      ["h", 1525, 362, 128, "Chỉnh sửa sản phẩm?"], ["n", 1450, 399, 106, "Chọn sản phẩm"], ["n", 1450, 462, 122, "Cập nhật thông tin"], ["n", 1450, 526, 88, "Lưu thay đổi"],
      ["h", 1600, 394, 98, "Xoá sản phẩm?"], ["n", 1600, 443, 108, "Chọn sản phẩm"], ["n", 1600, 507, 96, "Xác nhận xoá"], ["n", 1600, 571, 122, "Xoá khỏi database"],
      ["d", 1600, 617], ["d", 1525, 644], ["d", 1399, 672], ["n", 1399, 729, 185, "Quay về danh sách sản phẩm"], ["e", 1399, 773],
    ]}
  >
    <path d="M1174 286H1687V695H1174zM1174 303H1245L1255 293V286" fill="none" stroke="#333" strokeWidth="2" />
    <text x="1177" y="299" fontSize="13" fill="#111">Hành động</text>
  </Activity>
)

const ManageActivity = () => (
  <Activity
    small
    box="488 93 563 350"
    lines={["M764 120V134", "M764 158V172", "M764 196V209", "M764 233V247", "M719 256H613V271", "M613 295V319", "M613 343V356H755", "M809 256H915V271", "M865 280H838V295", "M965 280H992V295", "M838 319V331H906", "M992 319V331H924", "M915 339V356H773", "M764 364V379", "M764 403V417"]}
    labels={[[709, 255, "Yes"], [855, 278, "Yes"]]}
    shapes={[
      ["s", 764, 113], ["n", 764, 146, 90, "Admin đăng nhập"], ["n", 764, 184, 128, "Vào mục quản lý đơn hàng"], ["n", 764, 221, 122, "Chọn đơn hàng cần xử lý"],
      ["h", 764, 256, 90, "Cập nhật trạng thái?"], ["n", 613, 283, 228, "Chọn trạng thái mới (Đang xử lý, giao hàng, huỷ...)"], ["n", 613, 331, 138, "Cập nhật trạng thái đơn hàng"],
      ["h", 915, 280, 100, "Xem chi tiết đơn hàng?"], ["n", 838, 307, 180, "Hiển thị sản phẩm, địa chỉ, khách hàng"], ["n", 992, 307, 102, "Không có hành động"],
      ["d", 915, 331], ["d", 764, 356], ["n", 764, 391, 138, "Quay lại danh sách đơn hàng"], ["e", 764, 424],
    ]}
  />
)

/* ---------- sequence diagrams ---------- */

type Seq = {
  box: string
  size: number
  actors: number[]
  aw: number
  ah: number
  top: number
  bottom: number
  notes: [number, number, number, number, string][]
  msgs: [number, number, number, string][]
  selfs?: [number, number, string][]
  frames?: [number, number, number, number][]
  guards?: [number, number, string][]
  dividers?: [number, number, number][]
}

const actorNames = ["Người dùng", "Browser", "Server", "Database"]

const Sequence = ({ box, size, actors, aw, ah, top, bottom, notes, msgs, selfs = [], frames = [], guards = [], dividers = [] }: Seq) => (
  <svg viewBox={box} className="block w-full font-['Noto_Sans',sans-serif]" fontSize={size} textAnchor="middle" fill="#333">
    {actors.map((x, i) => (
      <g key={x}>
        <path d={`M${x} ${top + ah}V${bottom}`} stroke="#dcd9ea" strokeWidth="1.500" />
        {[top, bottom].map((y) => (
          <g key={y}>
            <rect x={x - aw / 2} y={y} width={aw} height={ah} rx="2" fill="#eaeaff" />
            <text x={x} y={y + ah / 2 + 3}>{actorNames[i]}</text>
          </g>
        ))}
      </g>
    ))}
    {notes.map(([x, y, w, h, t]) => (
      <g key={y}>
        <rect x={x} y={y} width={w} height={h} fill="#fff5ad" stroke="#d5cd80" />
        <text x={x + w / 2} y={y + h / 2 + 3}>{t}</text>
      </g>
    ))}
    {frames.map(([x, y, w, h]) => (
      <g key={y}>
        <rect x={x} y={y} width={w} height={h} fill="none" stroke="#e6e6fa" strokeWidth="1.300" />
        <path d={`M${x} ${y}h${size * 2.800}v${size * 0.800}l-4 4H${x}z`} fill="#e6e6fb" />
        <text x={x + size * 1.300} y={y + size}>alt</text>
      </g>
    ))}
    {dividers.map(([x, y, w]) => <path key={y} d={`M${x} ${y}h${w}`} stroke="#dcdcf5" strokeDasharray="3 2" />)}
    {guards.map(([x, y, t]) => <text key={y} x={x} y={y + 3}>{t}</text>)}
    {msgs.map(([a, b, y, t]) => {
      const lines = t.split("|")
      return (
        <g key={y}>
          <path d={`M${a} ${y}H${b > a ? b - 1 : b + 1}`} stroke={b > a ? "#666" : "#aaa"} strokeWidth="1.200" markerEnd="url(#arr)" />
          {lines.map((l, i) => (
            <text key={i} x={(a + b) / 2} y={y - size * 0.550 - (lines.length - 1 - i) * (size + 0.500)}>{l}</text>
          ))}
        </g>
      )
    })}
    {selfs.map(([x, y, t]) => (
      <g key={y}>
        <path d={`M${x} ${y + 8}h${size * 2}q8 6 0 ${size + 2}H${x + 1}`} fill="none" stroke="#666" strokeWidth="1.200" markerEnd="url(#arr)" />
        <text x={x} y={y + 3}>{t}</text>
      </g>
    ))}
  </svg>
)

const login: Seq = {
  box: "393 190 563 770", size: 9, actors: [449, 607, 780, 908], aw: 81, ah: 36, top: 201, bottom: 915,
  notes: [[436, 240, 484, 22, "ĐĂNG NHẬP HỆ THỐNG"]],
  msgs: [
    [449, 607, 288, "Truy cập trang đăng nhập"], [607, 449, 313, "Hiển thị form login"], [449, 607, 339, "Nhập username và password"],
    [607, 780, 416, "POST /login|{username, password}"], [780, 908, 463, "SELECT * FROM users|WHERE username = ?|AND active = 1"],
    [908, 780, 489, "Trả về thông tin user"], [780, 607, 548, "Error: Tài khoản không tồn tại|hoặc đã bị khóa"], [607, 449, 574, "Hiển thị thông báo lỗi"],
    [780, 607, 689, "Error: Mật khẩu không chính xác"], [607, 449, 715, "Hiển thị thông báo lỗi"],
    [780, 607, 817, "Success: Login thành công|{user_id, username, role}"], [607, 449, 895, "Chuyển đến trang chủ|Hiển thị thông tin user"],
  ],
  selfs: [[607, 356, "Validate dữ liệu"], [780, 615, "Verify password với bcrypt"], [780, 756, "Tạo session và lưu thông tin user"], [607, 833, "Lưu session/token"]],
  frames: [[438, 493, 425, 412], [444, 646, 413, 254]],
  guards: [[664, 500, "[User không tồn tại hoặc bị khóa]"], [651, 589, "[User tồn tại]"], [664, 652, "[Password sai]"], [651, 731, "[Password đúng]"]],
  dividers: [[438, 582, 425], [444, 724, 413]],
}

const browse: Seq = {
  box: "1144 190 563 770", size: 7, actors: [1191, 1303, 1465, 1646], aw: 58, ah: 26, top: 232, bottom: 825,
  notes: [[1180, 261, 475, 16, "XEM DANH SÁCH SẢN PHẨM"], [1180, 538, 475, 15, "XEM CHI TIẾT SẢN PHẨM"]],
  msgs: [
    [1191, 1303, 295, "Truy cập trang sản phẩm"], [1303, 1465, 314, "GET /products?category_id=&search=&page="],
    [1465, 1646, 339, "SELECT * FROM categories|WHERE status = 1"], [1646, 1465, 358, "Danh sách danh mục"],
    [1465, 1646, 427, "SELECT p.*, c.name as category_name|FROM products p|JOIN categories c ON p.category_id = c.category_id|WHERE p.status = 1|AND p.category_id = ?|AND p.name LIKE ?|ORDER BY p.create_date DESC|LIMIT ? OFFSET ?"],
    [1646, 1465, 445, "Danh sách sản phẩm"], [1465, 1646, 471, "SELECT COUNT(*) FROM products|WHERE status = 1"], [1646, 1465, 490, "Tổng số sản phẩm"],
    [1465, 1303, 508, "{products[], categories[], total, page}"], [1303, 1191, 534, "Hiển thị danh sách sản phẩm|với phân trang và bộ lọc"],
    [1191, 1303, 571, "Click vào sản phẩm"], [1303, 1465, 589, "GET /product?id="],
    [1465, 1646, 630, "SELECT p.*, c.name as category_name|FROM products p|JOIN categories c ON p.category_id = c.category_id|WHERE p.product_id = ?"],
    [1646, 1465, 649, "Chi tiết sản phẩm"], [1465, 1646, 682, "UPDATE products|SET views = views + 1|WHERE product_id = ?"], [1646, 1465, 700, "Cập nhật lượt xem"],
    [1465, 1646, 755, "SELECT c.*, u.username, u.full_name|FROM comments c|JOIN users u ON c.user_id = u.user_id|WHERE c.product_id = ?|AND c.status = 1|ORDER BY c.date DESC"],
    [1646, 1465, 773, "Danh sách bình luận"], [1465, 1303, 791, "{product, comments[]}"], [1303, 1191, 817, "Hiển thị chi tiết sản phẩm|và bình luận"],
  ],
}

const cart: Seq = {
  box: "485 190 563 770", size: 7, actors: [544, 669, 805, 992], aw: 62, ah: 27, top: 198, bottom: 930,
  notes: [[532, 229, 472, 16, "THÊM SẢN PHẨM VÀO GIỎ HÀNG"]],
  msgs: [
    [544, 669, 272, "Click \"Thêm vào giỏ\"|Chọn số lượng"], [669, 544, 343, "Chuyển đến trang đăng nhập"], [669, 805, 388, "POST /cart/add|{product_id, quantity}"],
    [805, 992, 424, "SELECT * FROM products|WHERE product_id = ?|AND status = 1"], [992, 805, 442, "Thông tin sản phẩm"],
    [805, 669, 481, "Error: Sản phẩm không tồn tại"], [669, 544, 500, "Hiển thị thông báo lỗi"], [805, 669, 557, "Error: Số lượng vượt quá tồn kho"], [669, 544, 577, "Hiển thị thông báo lỗi"],
    [805, 992, 631, "SELECT * FROM carts|WHERE user_id = ?|AND product_id = ?"], [992, 805, 649, "Kiểm tra sản phẩm trong giỏ"],
    [805, 992, 703, "UPDATE carts|SET product_quantity = product_quantity + ?|WHERE cart_id = ?"], [992, 805, 722, "Cập nhật số lượng"],
    [805, 992, 785, "INSERT INTO carts|(user_id, product_id, product_name,|product_price, product_quantity, product_image)|VALUES (?, ?, ?, ?, ?, ?)"],
    [992, 805, 804, "Thêm vào giỏ hàng"], [805, 992, 835, "SELECT COUNT(*) FROM carts|WHERE user_id = ?"], [992, 805, 855, "Tổng số sản phẩm trong giỏ"],
    [805, 669, 883, "Success: Thêm thành công|{cart_count}"], [669, 544, 910, "Cập nhật badge giỏ hàng|Hiển thị thông báo thành công"],
  ],
  selfs: [[669, 286, "Kiểm tra đăng nhập"]],
  frames: [[532, 308, 477, 613], [536, 447, 468, 470], [540, 523, 460, 390], [801, 654, 195, 154]],
  guards: [[780, 314, "[Chưa đăng nhập]"], [770, 354, "[Đã đăng nhập]"], [780, 452, "[Sản phẩm không tồn tại]"], [770, 512, "[Kiểm tra số lượng tồn kho]"], [780, 528, "[Số lượng không đủ]"], [770, 588, "[Số lượng hợp lệ]"], [909, 659, "[Sản phẩm đã có trong giỏ]"], [898, 734, "[Sản phẩm chưa có trong giỏ]"]],
  dividers: [[532, 349, 477], [536, 507, 468], [540, 583, 460], [801, 728, 195]],
}

const SequenceRow = () => (
  <div className="flex gap-[5px]">
    <Sheet page="33" gap="pt-[6px]"><Sequence {...login} /></Sheet>
    <Sheet page="34" gap="pt-[6px]"><Sequence {...browse} /></Sheet>
    <Sheet page="35" gap="pt-[6px]"><Sequence {...cart} /></Sheet>
  </div>
)

const BlankRow = () => (
  <div className="flex gap-[5px]">
    <Sheet /><Sheet /><Sheet />
  </div>
)

/* ---------- page ---------- */

const TabStop = () => (
  <span className="flex h-[12px] w-[12px] shrink-0 items-center justify-center border border-[#d0d0d0] bg-white">
    <svg viewBox="0 0 8 8" className="h-[5px] w-[5px]" fill="none" stroke="#555" strokeWidth="2"><path d="M2 0v6h6" /></svg>
  </span>
)

const Watermark = ({ place, children }: { place: string; children: string }) => (
  <p className={"pointer-events-none absolute font-['Liberation_Sans',sans-serif] text-[22px] leading-[26px] whitespace-nowrap text-[#b8babd] [text-shadow:-1px_1px_0_#8a8a90,1px_-1px_0_#ffffff] " + place}>{children}</p>
)

const Logo = () => (
  <a href="#top" className="absolute top-[11px] left-[803px] flex items-center">
    <svg viewBox="0 0 81 78" className="h-[26px] w-[27px]">
      <path d="M8 2H56L38 72H10Q3 72 3 66V8Q3 2 8 2z" fill="#d5171f" stroke="#fff" strokeWidth="3" />
      <path d="M58 12H74Q79 12 79 18V70Q79 76 73 76H34z" fill="#222" stroke="#fff" strokeWidth="3" />
      <path d="M30 12q-9 0-8 10t-7 13q8 3 7 13t8 10M56 26q9 0 8 10t7 10q-8 3-7 12t-8 10" fill="none" stroke="#fff" strokeWidth="5" />
      <path d="M58 4L32 76" stroke="#fff" strokeWidth="5" />
    </svg>
    <span className="ml-[2px] text-[15px] leading-[20px] font-bold text-[#1b1b1b] [-webkit-text-stroke:3px_white] [paint-order:stroke_fill]">
      <span className="text-[#d5171f]">TOP</span>CODE<span className="text-[#d5171f]">.</span>VN
    </span>
  </a>
)

export default function App() {
  return (
    <main id="top" className="w-full bg-[#e6e6e6] font-['Noto_Sans','Open_Sans',sans-serif]">
      <svg className="absolute h-0 w-0">
        <marker id="arr" viewBox="0 0 8 8" refX="7" refY="4" markerWidth="8" markerHeight="8" markerUnits="userSpaceOnUse" orient="auto-start-reverse">
          <path d="M0 1l8 3-8 3z" fill="#222" />
        </marker>
      </svg>

      <section className="relative overflow-hidden border-r-2 border-black">
        <div className="-mt-[6px] -ml-[3px]">
          <TitleBar redo />
          <Ribbon />
          <Notice />
        </div>
        <div className="relative h-[376px] overflow-hidden">
          <div className="flex h-[15px] justify-between">
            <TabStop />
            <Ruler length={391} zero={47} end={345} unit={18.7} step={1} className="mr-[78px]" />
          </div>
          <div className="relative">
            <SideRuler height={361} zero={24} end={361} unit={18.7} step={1} />
            <div className="flex justify-center gap-[9px] pl-px">
              <BigSheet gap="pt-[14px]"><Schema /></BigSheet>
              <BigSheet gap="pt-[42px]"><Flow /></BigSheet>
            </div>
            <span className="absolute top-[169px] left-[824px] h-[8px] w-px bg-[#333]" />
          </div>
        </div>
        <StatusBar page="Page 30 of 85" zoom="80%" value={39} />
        <Logo />
      </section>

      <section className="relative overflow-hidden">
        <TitleBar />
        <Ribbon />
        <Notice />
        <div className="h-[377px] overflow-hidden">
          <div className="flex h-[19px]">
            <TabStop />
            <Ruler length={246} zero={30} end={216} unit={11.6} step={2} className="ml-[91px]" />
          </div>
          <div className="flex h-[358px]">
            <div className="relative w-[13px]"><SideRuler height={347} zero={30} end={316} unit={11.6} step={2} /></div>
            <div className="flex flex-1 flex-col items-center gap-[5px] overflow-hidden">
              <div className="flex shrink-0 gap-[5px]">
                <Sheet page="27" gap="pt-[28px]"><Schema /></Sheet>
                <Sheet page="28" gap="pt-[26px]"><Flow /></Sheet>
                <Sheet page="29" gap="pt-[24px]"><Entities /></Sheet>
              </div>
              <BlankRow />
            </div>
            <div className="-mt-[4px] flex"><ScrollBar thumb="mt-[109px]" /></div>
          </div>
        </div>
        <StatusBar page="Page 28 of 84" zoom="50%" value={24} />
      </section>

      <section className="relative overflow-hidden">
        <div className="-ml-px">
          <TitleBar />
          <Ribbon />
          <Notice />
        </div>
        <div className="h-[376px] overflow-hidden">
          <div className="flex h-[15px]">
            <TabStop />
            <Ruler length={246} zero={30} end={216} unit={11.6} step={2} className="ml-[90px]" />
          </div>
          <div className="flex h-[361px] pl-[12px]">
            <div className="flex flex-1 flex-col items-center gap-[5px] overflow-hidden">
              <div className="-mt-[40px] flex shrink-0 gap-[5px]">
                <Sheet page="30" gap="pt-[19px]"><OrderActivity /></Sheet>
                <Sheet page="31" gap="pt-[19px]"><ProductActivity /></Sheet>
                <Sheet page="32" gap="pt-[19px]"><ManageActivity /></Sheet>
              </div>
              <SequenceRow />
            </div>
            <ScrollBar thumb="mt-[122px]" />
          </div>
        </div>
        <div className="h-[3px] bg-[#eef2f8]" />
        <Watermark place="top-[187px] left-[89px]">TopCode.vn</Watermark>
      </section>

      <section className="relative overflow-hidden">
        <div className="-ml-[2px]">
          <TitleBar />
          <Ribbon />
          <Notice />
        </div>
        <div className="h-[376px] overflow-hidden">
          <div className="flex h-[15px]">
            <TabStop />
            <Ruler length={246} zero={30} end={216} unit={11.6} step={2} className="ml-[89px]" />
          </div>
          <div className="flex flex-col items-center gap-[5px] pl-[2px]">
            <SequenceRow />
            <BlankRow />
          </div>
        </div>
        <StatusBar page="Page 34 of 84" zoom="50%" value={24} />
        <Watermark place="top-[390px] left-[352px]">Copyright © TopCode.vn</Watermark>
      </section>
    </main>
  )
}
